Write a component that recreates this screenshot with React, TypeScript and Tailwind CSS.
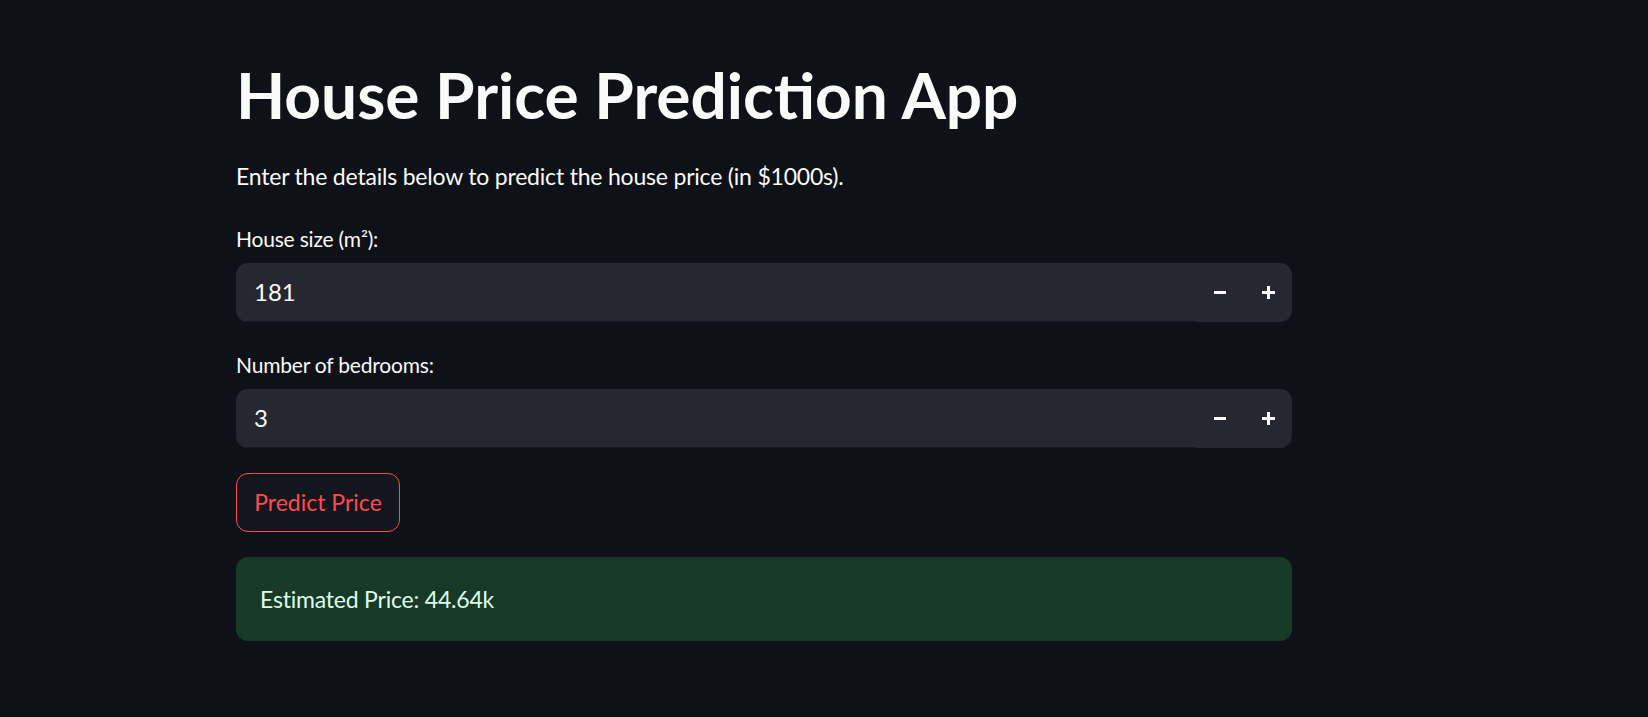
import React, { useState } from "react";

const font = { fontFamily: "Lato, 'Noto Sans', sans-serif" };

const NumberInput = ({
  label,
  value,
  onChange,
}: {
  label: string;
  value: number;
  onChange: (v: number) => void;
}) => {
  return (
    <div className="flex flex-col">
      <label className="text-[21px] leading-[30px] tracking-[-0.2px] text-[#fafafa]">{label}</label>
      <div className="mt-[9px] flex h-[59px] rounded-[12px] bg-[#262730] overflow-hidden">
        {/* text part */}
        <div className="flex-1 flex items-center pl-[18px] border-b border-[#17181f] text-[24px] text-[#fafafa]">
          {value}
        </div>
        {/* step buttons */}
        <button
          onClick={() => onChange(value - 1)}
          className="w-[48px] h-full flex items-center justify-center"
        >
          <span className="block w-[12px] h-[3px] bg-[#fafafa]" />
        </button>
        <button
          onClick={() => onChange(value + 1)}
          className="w-[48px] h-full flex items-center justify-center"
        >
          <svg width="13" height="13" viewBox="0 0 13 13">
            <rect x="0" y="5" width="13" height="3" fill="#fafafa" />
            <rect x="5" y="0" width="3" height="13" fill="#fafafa" />
          </svg>
        </button>
      </div>
    </div>
  );
};

export default function App() {
  const [size, setSize] = useState(181);
  const [beds, setBeds] = useState(3);

  return (
    <div className="min-h-screen w-full bg-[#0e1117]" style={font}>
      <div className="ml-[236px] w-[1056px] pt-[54px] flex flex-col">
        {/* heading */}
        <h1 className="text-[64px] leading-[82px] font-bold text-[#fafafa]">
          House Price Prediction App
        </h1>
        <p className="mt-[21px] text-[23px] leading-[38px] tracking-[-0.2px] text-[#fafafa]">
          Enter the details below to predict the house price (in $1000s).
        </p>

        <div className="mt-[29px]">
          <NumberInput label="House size (m²):" value={size} onChange={setSize} />
        </div>
        <div className="mt-[28px]">
          <NumberInput label="Number of bedrooms:" value={beds} onChange={setBeds} />
        </div>

        {/* action */}
        <div className="mt-[25px]">
          <button className="h-[59px] w-[164px] rounded-[12px] border border-[#ff4b4b] bg-[#13161e] text-[23px] text-[#ff4b4b]">
            Predict Price
          </button>
        </div>

        {/* result */}
        <div className="mt-[25px] h-[84px] rounded-[12px] bg-[#173928] flex items-center px-[24px] text-[23px] tracking-[-0.2px] text-[#dffde9]">
          Estimated Price: 44.64k
        </div>
      </div>
    </div>
  );
}
